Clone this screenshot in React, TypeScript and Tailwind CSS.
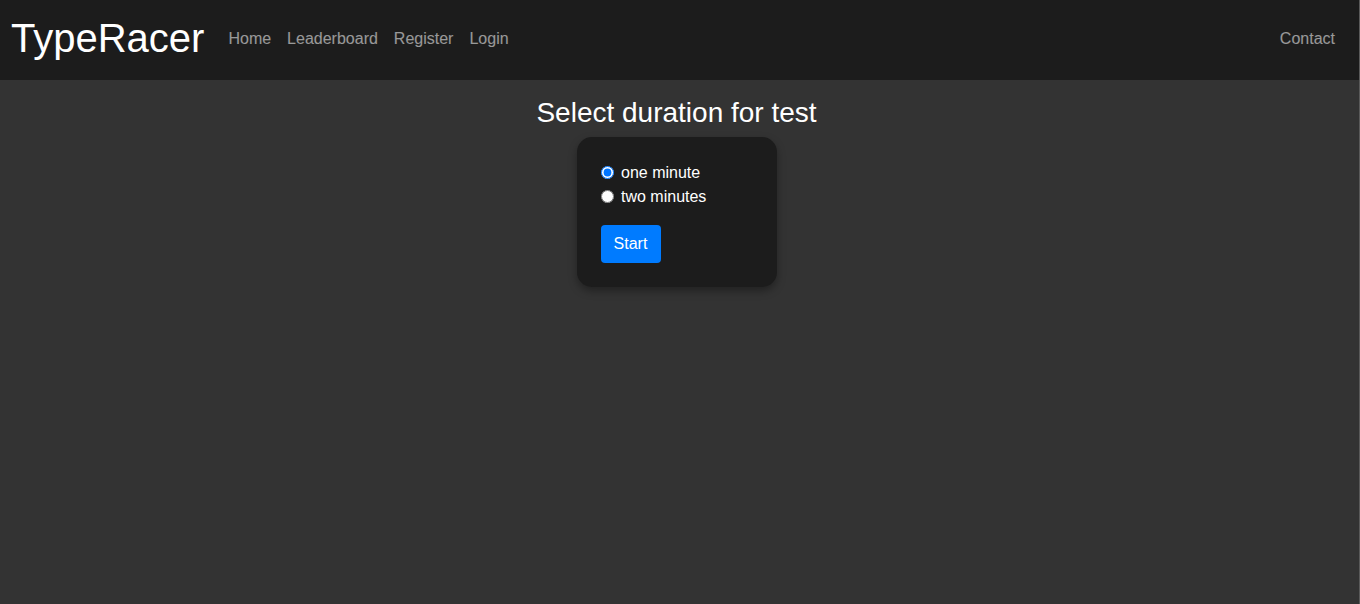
import { useState } from "react";

const links = ["Home", "Leaderboard", "Register", "Login"];

export default function App() {
  const [duration, setDuration] = useState("one");

  return (
    <div className="min-h-[604px] bg-[#333333] border-r border-[#5a5a5a] font-['Liberation_Sans',Arial,sans-serif] text-white">
      {/* Navbar */}
      <nav className="h-20 bg-[#1c1c1c] flex items-center pl-[11px] pr-4 pb-[2px]">
        <a className="text-[40px] leading-none text-white mr-4 pb-[2px]">TypeRacer</a>
        <ul className="flex items-center">
          {links.map((l) => (
            <li key={l}>
              <a className="block px-2 py-2 text-base text-white/55">{l}</a>
            </li>
          ))}
        </ul>
        <a className="ml-auto px-2 py-2 text-base text-white/55">Contact</a>
      </nav>

      {/* Main */}
      <main className="flex flex-col items-center pt-4 pr-[6px]">
        <h2 className="text-[28px] leading-[1.2] mb-[7px]">Select duration for test</h2>
        <div className="w-[200px] rounded-[15px] bg-[#1c1c1c] p-6 shadow-[0_4px_8px_rgba(0,0,0,0.35)]">
          <label className="flex items-center h-6 text-base">
            <input
              type="radio"
              name="duration"
              checked={duration === "one"}
              onChange={() => setDuration("one")}
              className="m-0 mr-[7.5px] w-[13px] h-[13px]"
            />
            one minute
          </label>
          <label className="flex items-center h-6 text-base">
            <input
              type="radio"
              name="duration"
              checked={duration === "two"}
              onChange={() => setDuration("two")}
              className="m-0 mr-[7.5px] w-[13px] h-[13px]"
            />
            two minutes
          </label>
          <button className="mt-4 h-[38px] w-[60px] rounded bg-[#007bff] text-white text-base">Start</button>
        </div>
      </main>
    </div>
  );
}
